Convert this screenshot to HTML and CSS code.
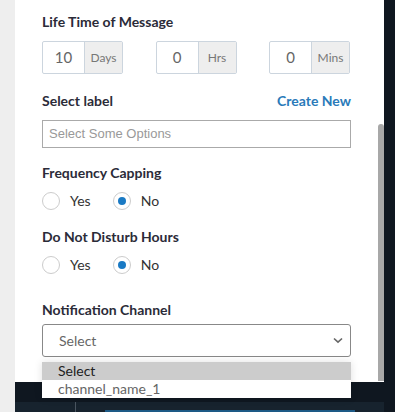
FILE: index.html
```html
<!DOCTYPE html>
<html lang="en">
<head>
  <meta charset="UTF-8">
  <title>Message Settings</title>
  <link rel="stylesheet" href="styles.css">
</head>
<body>
  <div class="screen">
    <div class="gutter"></div>
    <div class="main">
      <div class="panel">
        <div class="form">
          <div class="label">Life Time of Message</div>
          <div class="time-row">
            <div class="time-group"><span class="time-val">10</span><span class="time-unit">Days</span></div>
            <div class="time-group"><span class="time-val">0</span><span class="time-unit">Hrs</span></div>
            <div class="time-group"><span class="time-val">0</span><span class="time-unit">Mins</span></div>
          </div>

          <div class="label label-row">Select label <a class="create" href="#">Create New</a></div>
          <div class="multi">Select Some Options</div>

          <div class="label">Frequency Capping</div>
          <div class="radios">
            <label class="radio"><span class="dot"></span>Yes</label>
            <label class="radio"><span class="dot checked"></span>No</label>
          </div>

          <div class="label">Do Not Disturb Hours</div>
          <div class="radios">
            <label class="radio"><span class="dot"></span>Yes</label>
            <label class="radio"><span class="dot checked"></span>No</label>
          </div>

          <div class="label label-channel">Notification Channel</div>
          <div class="select-wrap">
            <div class="select">Select
              <svg class="chev" width="10" height="7" viewBox="0 0 10 7"><path d="M1 1.5 L5 5.2 L9 1.5" fill="none" stroke="#666" stroke-width="1.6"/></svg>
            </div>
            <ul class="options">
              <li class="active">Select</li>
              <li>channel_name_1</li>
            </ul>
          </div>
        </div>
        <div class="scrollbar"></div>
      </div>
      <div class="footer">
        <div class="footer-top"></div>
        <div class="footer-bottom">
          <div class="footer-side"></div>
          <div class="footer-tab"></div>
        </div>
      </div>
    </div>
    <div class="edge"></div>
  </div>
</body>
</html>
```

FILE: styles.css
```css
body {
  margin: 0;
  font-family: Lato, "Open Sans", sans-serif;
  color: #2b2b38;
}

.screen {
  display: flex;
  width: 395px;
  height: 412px;
  overflow: hidden;
}

.gutter {
  width: 15px;
  background: #eeeeee;
}

.edge {
  width: 11px;
  background: #0f1720;
}

.main {
  flex: 1;
  display: flex;
  flex-direction: column;
}

.panel {
  flex: 1;
  background: #fff;
  position: relative;
  display: flex;
}

.form {
  flex: 1;
  padding: 13px 27px 0 27px;
}

.scrollbar {
  width: 6px;
  margin-top: 124px;
  margin-bottom: 1px;
  background: #a8a8a8;
  border-radius: 3px 3px 0 0;
}

.label {
  font-size: 14px;
  font-weight: bold;
  line-height: 17px;
}

.label-row {
  display: flex;
  justify-content: space-between;
  margin-top: 18px;
}

.create {
  color: #2a7ab9;
  text-decoration: none;
}

.time-row {
  display: flex;
  justify-content: space-between;
  margin-top: 11px;
  padding-right: 1px;
}

.time-group {
  display: flex;
  width: 81px;
  height: 33px;
  box-sizing: border-box;
  border: 1px solid #ccd5de;
  border-radius: 2px;
}

.time-val {
  flex: 1;
  text-align: center;
  line-height: 31px;
  font-size: 15px;
  color: #666;
}

.time-unit {
  width: 37px;
  background: #eeeeee;
  border-left: 1px solid #ccd5de;
  text-align: center;
  line-height: 31px;
  font-size: 12px;
  color: #777;
}

.multi {
  margin-top: 11px;
  height: 28px;
  box-sizing: border-box;
  border: 1px solid #aaa;
  padding-left: 6px;
  line-height: 26px;
  font-family: "Liberation Sans", Arial, sans-serif;
  font-size: 13px;
  color: #999;
}

.multi + .label {
  margin-top: 16px;
}

.radios {
  display: flex;
  gap: 22px;
  margin-top: 11px;
  margin-bottom: 18px;
}

.radio {
  display: flex;
  align-items: center;
  gap: 10px;
  font-size: 14px;
  line-height: 18px;
  color: #333;
}

.dot {
  width: 16px;
  height: 16px;
  border: 1px solid #ccc;
  border-radius: 50%;
  position: relative;
}

.dot.checked::after {
  content: "";
  position: absolute;
  left: 4px;
  top: 4px;
  width: 8px;
  height: 8px;
  border-radius: 50%;
  background: #1a7ac4;
}

.label-channel {
  margin-top: 27px;
}

.select-wrap {
  position: relative;
  margin-top: 6px;
}

.select {
  height: 33px;
  box-sizing: border-box;
  border: 1px solid #888;
  border-radius: 3px;
  padding-left: 16px;
  line-height: 31px;
  font-size: 14px;
  color: #666;
  display: flex;
  justify-content: space-between;
  align-items: center;
  padding-right: 7px;
}

.options {
  position: absolute;
  left: 0;
  right: 0;
  top: 38px;
  margin: 0;
  padding: 0;
  list-style: none;
  background: #fff;
  box-shadow: 0 0 8px rgba(0, 0, 0, 0.12);
  z-index: 2;
}

.options li {
  height: 18px;
  line-height: 18px;
  padding-left: 16px;
  font-size: 14px;
  color: #666;
}

.options li.active {
  background: #cccccc;
  color: #222;
}

.footer {
  height: 30px;
  display: flex;
  flex-direction: column;
}

.footer-top {
  height: 20px;
  background: #0f1720;
}

.footer-bottom {
  flex: 1;
  display: flex;
  background: #17232e;
}

.footer-side {
  width: 60px;
  border-right: 1px solid #4a5560;
}

.footer-tab {
  width: 250px;
  margin-left: 29px;
  margin-top: 8px;
  background: #1d5a86;
}
```
